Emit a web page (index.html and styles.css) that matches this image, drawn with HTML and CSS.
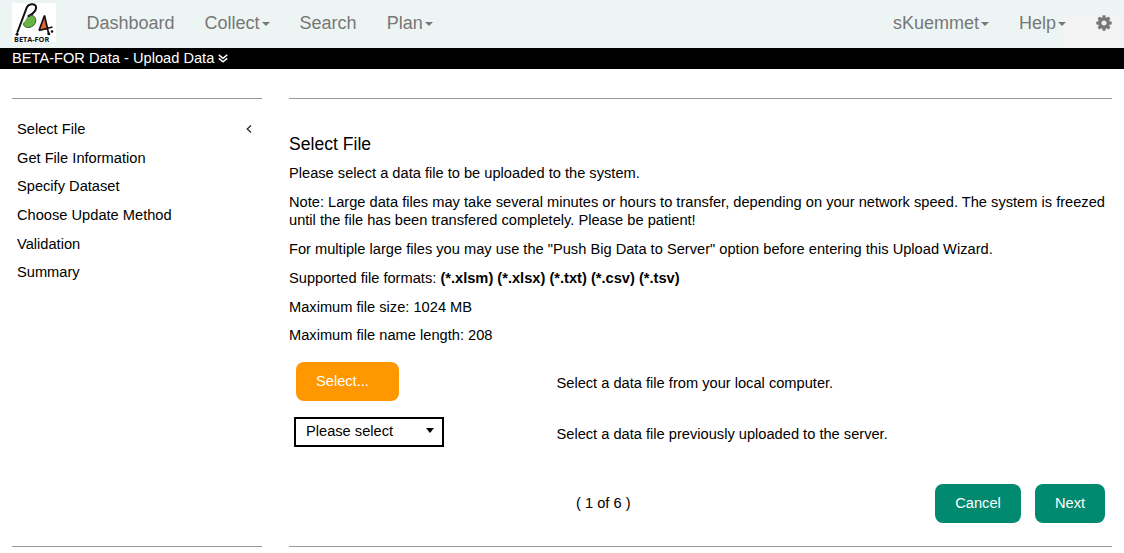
FILE: index.html
```html
<!DOCTYPE html>
<html lang="en">
<head>
<meta charset="utf-8">
<title>BETA-FOR Data - Upload Data</title>
<link rel="stylesheet" href="styles.css">
</head>
<body>
<header class="navbar">
  <a class="logo">
    <svg class="logo-mark" viewBox="0 0 44 33" width="44" height="33" aria-hidden="true">
      <path d="M16 13C20 11 24 14 23.800 18C23.500 22 19 25 15.500 24.500C12 24 11 22 12 19.500Z" fill="#68b346"/>
      <path d="M5.500 29L15 4C16.500 1 22 0 23.800 3C25 6 22 11 16.500 13" fill="none" stroke="#101010" stroke-width="2" stroke-linecap="round"/>
      <path d="M16.500 13C21 11 24 14 23.800 18C23.500 22 19 25 15.500 24.500C12 24 11 22 12 19.500" fill="none" stroke="#2f5f22" stroke-width="1"/>
      <path d="M32 14L27.500 27L36 27Z" fill="#e0662c"/>
      <path d="M32.500 12.500L27 27.500M32.500 12.500L36.500 30M27 27.500L40.500 24" fill="none" stroke="#101010" stroke-width="1.700"/>
      <circle cx="5" cy="31.300" r="1.500" fill="#101010"/>
      <circle cx="36.800" cy="30.800" r="1.500" fill="#101010"/>
      <circle cx="40" cy="28.500" r="1.300" fill="#101010"/>
    </svg>
    <span class="logo-text">BETA-FOR</span>
  </a>
  <nav class="menu">
    <a>Dashboard</a>
    <a>Collect<i class="caret"></i></a>
    <a>Search</a>
    <a>Plan<i class="caret"></i></a>
  </nav>
  <nav class="menu menu-right">
    <a>sKuemmet<i class="caret"></i></a>
    <a>Help<i class="caret"></i></a>
    <a class="settings"><svg viewBox="0 0 1792 1792" width="18" height="18" fill="#777"><path d="M1152 896q0-106-75-181t-181-75-181 75-75 181 75 181 181 75 181-75 75-181zm512-109v222q0 12-8 23t-20 13l-185 28q-19 54-39 91 35 50 107 138 10 12 10 25t-9 23q-27 37-99 108t-94 71q-12 0-26-9l-138-108q-44 23-91 38-16 136-29 186-7 28-36 28h-222q-14 0-24.500-8.500t-11.500-21.500l-28-184q-49-16-90-37l-141 107q-10 9-25 9-14 0-25-11-126-114-165-168-7-10-7-23 0-12 8-23 15-21 51-66.500t54-70.500q-27-50-41-99l-183-27q-13-2-21-12.500t-8-23.500v-222q0-12 8-23t19-13l186-28q14-46 39-92-40-57-107-138-10-12-10-24 0-10 9-23 26-36 98.500-107.500t94.500-71.500q13 0 26 10l138 107q44-23 91-38 16-136 29-186 7-28 36-28h222q14 0 24.500 8.500t11.500 21.500l28 184q49 16 90 37l142-107q9-9 24-9 13 0 25 10 129 119 165 170 7 8 7 22 0 12-8 23-15 21-51 66.500t-54 70.500q26 50 41 98l183 28q13 2 21 12.500t8 23.500z"/></svg></a>
  </nav>
</header>
<div class="titlebar">
  <span>BETA-FOR Data - Upload Data</span>
  <svg viewBox="0 0 10 9" width="10" height="9" fill="none" stroke="#fff" stroke-width="1.500"><path d="M.8 .8L5 4.300L9.200 .8M.8 4.300L5 7.800L9.200 4.300"/></svg>
</div>
<div class="wizard">
  <aside class="steps">
    <div class="step"><span>Select File</span><svg viewBox="0 0 6 8" width="6" height="8" fill="none" stroke="#222" stroke-width="1.200"><path d="M5 .5L1.200 4L5 7.500"/></svg></div>
    <div class="step">Get File Information</div>
    <div class="step">Specify Dataset</div>
    <div class="step">Choose Update Method</div>
    <div class="step">Validation</div>
    <div class="step">Summary</div>
  </aside>
  <main class="content">
    <h1>Select File</h1>
    <p>Please select a data file to be uploaded to the system.</p>
    <p>Note: Large data files may take several minutes or hours to transfer, depending on your network speed. The system is freezed<br>until the file has been transfered completely. Please be patient!</p>
    <p>For multiple large files you may use the "Push Big Data to Server" option before entering this Upload Wizard.</p>
    <p>Supported file formats: <b>(*.xlsm) (*.xlsx) (*.txt) (*.csv) (*.tsv)</b></p>
    <p>Maximum file size: 1024 MB</p>
    <p>Maximum file name length: 208</p>
    <div class="source">
      <div class="control"><button class="btn btn-select">Select...</button></div>
      <span>Select a data file from your local computer.</span>
    </div>
    <div class="source source-server">
      <div class="control"><div class="dropdown"><span>Please select</span><i class="arrow"></i></div></div>
      <span>Select a data file previously uploaded to the server.</span>
    </div>
    <footer class="actions">
      <span class="page">( 1 of 6 )</span>
      <button class="btn btn-cancel">Cancel</button>
      <button class="btn btn-next">Next</button>
    </footer>
  </main>
</div>
</body>
</html>
```
FILE: styles.css
```css
* { box-sizing: border-box; }
body {
  margin: 0;
  height: 553px;
  overflow: hidden;
  background: #fff;
  color: #000;
  font: 14.650px/18.700px "Liberation Sans", Arial, sans-serif;
}
.navbar {
  display: flex;
  height: 48px;
  padding: 3px 12px 0;
  background: linear-gradient(#f3f3f3, #f3f3f3) right bottom / 63px 32px no-repeat #edf5f4;
  color: #777;
}
.logo {
  display: flex;
  flex-direction: column;
  width: 44px;
  height: 39px;
  background: #fff;
  color: #111;
}
.logo-mark { display: block; flex: none; }
.logo-text {
  padding-left: 2px;
  font: bold 7.300px/6px "Open Sans", "Liberation Sans", sans-serif;
  white-space: nowrap;
}
.menu {
  display: flex;
  gap: 30px;
  height: 40px;
  margin-left: 30.500px;
  font-size: 18px;
  line-height: 40px;
}
.menu a { display: flex; align-items: center; }
.menu-right { margin-left: auto; }
.caret {
  margin: 2px 0 0 2px;
  border: 4px solid transparent;
  border-top-color: #777;
  border-bottom: 0;
}
.settings { margin: 0 -1px 0 -1px; }
.titlebar {
  display: flex;
  align-items: center;
  gap: 4px;
  height: 21px;
  padding: 0 12px 1px;
  background: #000;
  color: #fff;
}
.wizard {
  display: flex;
  gap: 27px;
  height: 449px;
  margin: 29px 12px 0;
}
.steps {
  width: 250px;
  padding: 21px 10px 0 5px;
  border-top: 1px solid #999;
  border-bottom: 1px solid #999;
}
.step {
  display: flex;
  align-items: center;
  justify-content: space-between;
  margin-bottom: 9.950px;
}
.content {
  flex: 1;
  padding-top: 34px;
  border-top: 1px solid #999;
  border-bottom: 1px solid #999;
  white-space: nowrap;
}
h1 {
  margin: 0 0 9px;
  font-size: 17.600px;
  font-weight: normal;
  line-height: 22px;
}
p { margin: 0 0 10px; }
.source {
  display: flex;
  align-items: center;
  height: 39px;
  margin-top: 17px;
}
.source > span { padding-top: 4px; }
.control { width: 267.500px; padding-left: 7px; }
.btn {
  display: block;
  height: 39px;
  padding: 0 0 1px;
  border: 0;
  border-radius: 8px;
  background: #028a70;
  color: #fff;
  font: inherit;
}
.btn-select {
  width: 103px;
  padding-left: 20px;
  background: #ff9800;
  text-align: left;
}
.btn-cancel { width: 86px; }
.btn-next { width: 70px; }
.source-server {
  height: 30px;
  margin-top: 16px;
}
.source-server .control { padding-left: 5px; }
.dropdown {
  display: flex;
  align-items: center;
  justify-content: space-between;
  width: 150px;
  height: 30px;
  padding: 0 8px 2px 10px;
  border: 2px solid #000;
}
.arrow {
  border: 4px solid transparent;
  border-top: 5px solid #000;
  border-bottom: 0;
}
.actions {
  display: flex;
  align-items: center;
  gap: 14px;
  margin: 37px 7px 0 287px;
}
.page { margin-right: auto; }
```
